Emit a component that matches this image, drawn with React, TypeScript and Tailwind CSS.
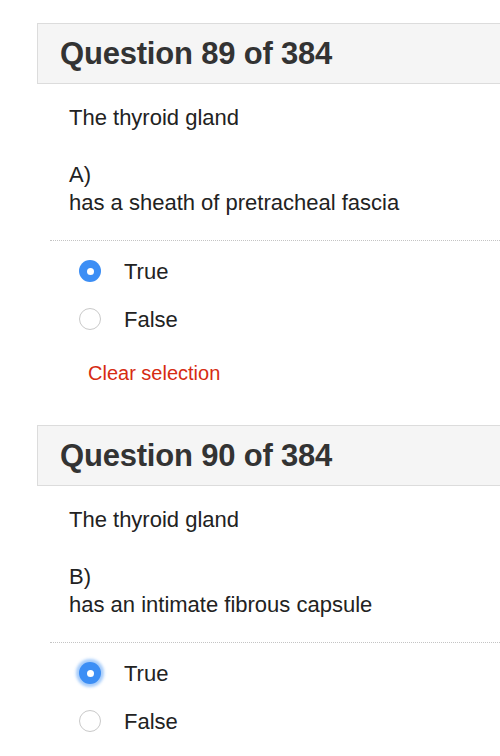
import React from 'react';

type Q = { num: number; letter: string; text: string; focused: boolean; showClear: boolean };

const questions: Q[] = [
    { num: 89, letter: 'A)', text: 'has a sheath of pretracheal fascia', focused: false, showClear: true },
    { num: 90, letter: 'B)', text: 'has an intimate fibrous capsule', focused: true, showClear: false },
];

const Radio = ({ checked, focused }: { checked: boolean; focused?: boolean }) => (
    <span
        className={`flex h-[22px] w-[22px] items-center justify-center rounded-full ${
            checked ? 'bg-[#3c8ef5]' : 'border-[1.5px] border-[#c9c9c9] bg-white'
        } ${focused ? 'shadow-[0_0_3px_3px_rgba(60,142,245,0.45)]' : ''}`}
    >
        {checked && <span className="h-[7px] w-[7px] rounded-full bg-white" />}
    </span>
);

const Question = ({ q }: { q: Q }) => (
    <section>
        <div className="ml-[37px] -mr-2 flex h-[61px] items-center border border-[#dcdcdc] bg-[#f5f5f5] pl-[22px]">
            <h2 className="text-[31px] font-bold leading-none tracking-[-0.2px] text-[#333]">
                Question {q.num} of 384
            </h2>
        </div>
        <div className="pl-[69px] text-[22px] leading-[28px] text-[#222]">
            <p className="mt-[20px]">The thyroid gland</p>
            <p className="mt-[29px]">{q.letter}</p>
            <p>{q.text}</p>
        </div>
        <div className="ml-[50px] mt-[23px] border-t border-dotted border-[#c4c4c4]" />
        <div className="pl-[79px] text-[22px] text-[#222]">
            <label className="mt-[18px] flex h-[24px] items-center gap-[23px]">
                <Radio checked focused={q.focused} />
                <span>True</span>
            </label>
            <label className="mt-[24px] flex h-[24px] items-center gap-[23px]">
                <Radio checked={false} />
                <span>False</span>
            </label>
        </div>
        {q.showClear && (
            <button className="ml-[88px] mt-[30px] block text-[20px] leading-[24px] text-[#d62b12]">
                Clear selection
            </button>
        )}
    </section>
);

export default function App() {
    return (
        <div className="h-[756px] w-[500px] overflow-hidden bg-white pt-[23px] font-['Liberation_Sans',Arial,sans-serif]">
            {questions.map((q, i) => (
                <div key={q.num} className={i > 0 ? 'mt-[40px]' : ''}>
                    <Question q={q} />
                </div>
            ))}
        </div>
    );
}
